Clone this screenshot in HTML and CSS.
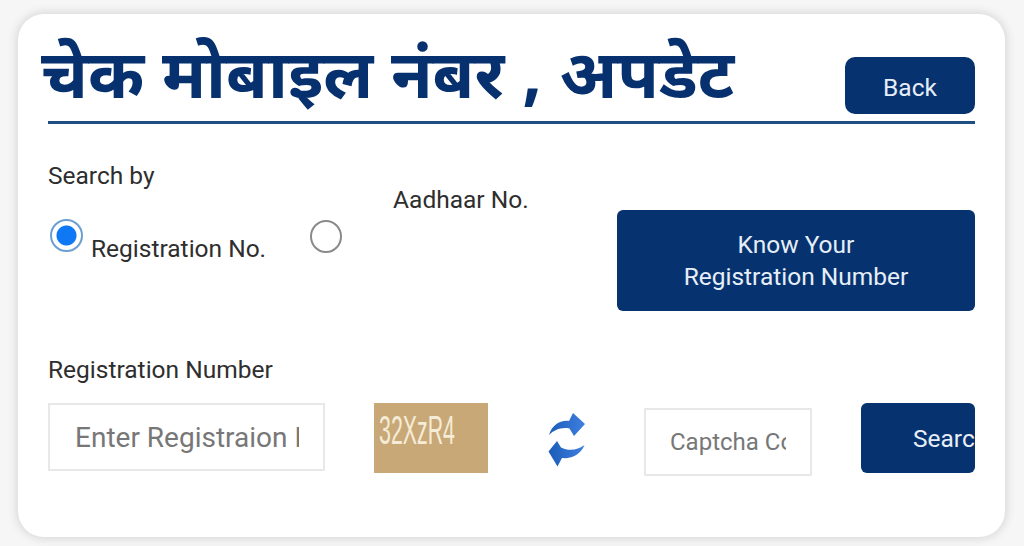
FILE: index.html
```html
<!DOCTYPE html>
<html lang="hi">
<head>
<meta charset="utf-8">
<title>चेक मोबाइल नंबर , अपडेट</title>
<link rel="stylesheet" href="styles.css">
</head>
<body>
<main class="card">
  <header class="head">
    <h1 class="title">चेक मोबाइल नंबर , अपडेट</h1>
    <button class="btn btn-back" type="button">Back</button>
  </header>
  <section class="search">
    <div class="search-left">
      <p class="label">Search by</p>
      <div class="options">
        <label class="option option-reg">
          <span class="radio radio-on"></span>
          <span class="opt-text">Registration No.</span>
        </label>
        <span class="radio radio-off"></span>
        <span class="opt-text opt-aadhaar">Aadhaar No.</span>
      </div>
    </div>
    <button class="btn btn-know" type="button">Know Your<br>Registration Number</button>
  </section>
  <section class="reg">
    <p class="label">Registration Number</p>
    <div class="reg-row">
      <input class="field field-reg" type="text" placeholder="Enter Registraion Number">
      <div class="captcha"><span class="captcha-text">32XzR4</span></div>
      <svg class="refresh" viewBox="0 0 38 54" aria-hidden="true">
        <defs>
          <linearGradient id="g" x1="0" y1="0" x2="1" y2="0">
            <stop offset="0" stop-color="#1c5cb8"/>
            <stop offset="1" stop-color="#3f7fe0"/>
          </linearGradient>
        </defs>
        <path fill="url(#g)" d="M1 22 C4 12 12 7 21 8 L25 0 L37 11 L26 23 L21.5 15.5 C13 14 6 17 1 22 Z"/>
        <path fill="url(#g)" d="M36.5 32 C33 41 24 46 14 45 L9.5 53.5 L0.5 38.5 L9 28 L13 34.5 C21 38.5 30 37 36.5 32 Z"/>
      </svg>
      <input class="field field-cap" type="text" placeholder="Captcha Code">
      <button class="btn btn-search" type="button">Search</button>
    </div>
  </section>
</main>
</body>
</html>
```
FILE: styles.css
```css
* { box-sizing: border-box; }
html, body { margin: 0; height: 100%; }
body {
  width: 1024px;
  height: 546px;
  overflow: hidden;
  background: #f6f6f6;
  padding: 14px 19px 9px 18px;
  font-family: Roboto, "Liberation Sans", sans-serif;
  color: #2e2e2e;
}
.card {
  height: 523px;
  background: #fff;
  border-radius: 26px;
  box-shadow: 0 0 9px 2px #d8d8d8;
  padding: 0 30px;
  display: flex;
  flex-direction: column;
}
.head {
  height: 110px;
  border-bottom: 3px solid #1f4e80;
  display: flex;
  justify-content: space-between;
  align-items: flex-end;
  padding-bottom: 7px;
}
.title {
  margin: 0 0 -13px -7px;
  font-family: "Noto Sans Devanagari", "Noto Sans", "Lohit Devanagari", sans-serif;
  font-size: 67.8px;
  line-height: 90px;
  font-weight: 700;
  color: #07306e;
  white-space: nowrap;
}
.btn {
  border: 0;
  background: #06336f;
  color: #e6eef8;
  font-family: Roboto, "Liberation Sans", sans-serif;
  font-size: 24.5px;
  border-radius: 6px;
}
.btn-back { width: 130px; height: 57px; border-radius: 10px; padding-top: 5px; }
.search {
  display: flex;
  justify-content: space-between;
  align-items: flex-start;
  margin-top: 37px;
}
.label { margin: 0; font-size: 24.5px; line-height: 30px; }
.search-left { width: 520px; }
.options { display: flex; margin-top: 28px; height: 60px; align-items: flex-start; }
.option { display: flex; align-items: flex-start; }
.radio { width: 33px; height: 33px; border-radius: 50%; flex: none; display: block; }
.radio-on {
  margin-left: 2px;
  border: 2px solid #6b9ed1;
  background: radial-gradient(circle, #0f78f5 0 9.5px, #fff 10.5px);
}
.radio-off { width: 32px; height: 33px; margin: 1px 0 0 44px; border: 2px solid #8a8a8a; }
.opt-text { font-size: 24.5px; line-height: 30px; white-space: nowrap; }
.option-reg .opt-text { margin: 15px 0 0 8px; }
.opt-aadhaar { margin: -34px 0 0 51px; }
.btn-know { width: 358px; height: 101px; margin-top: 49px; padding-top: 2px; line-height: 32px; }
.reg { margin-top: 44px; }
.reg-row { display: flex; align-items: flex-start; margin-top: 18px; }
.field {
  border: 2px solid #e8e8e8;
  background: #fff;
  font-family: Roboto, "Liberation Sans", sans-serif;
  outline: 0;
}
.field::placeholder { color: #777; opacity: 1; }
.field-reg { width: 277px; height: 68px; padding: 0 24px 0 25px; font-size: 28px; }
.captcha {
  width: 114px; height: 70px; margin-left: 49px;
  background: #c9a877;
  overflow: hidden;
}
.captcha-text {
  display: block;
  margin: 5px 0 0 5px;
  font-family: "Liberation Sans", sans-serif;
  font-size: 40px;
  line-height: 44px;
  color: #f5ecd8;
  transform: scaleX(.534);
  transform-origin: 0 0;
  white-space: nowrap;
}
.refresh { width: 38px; height: 54px; margin: 10px 0 0 60px; flex: none; }
.field-cap { width: 168px; height: 68px; margin: 5px 0 0 58px; padding: 0 24px 0 24px; font-size: 24px; }
.btn-search {
  width: 114px; height: 70px; margin-left: 49px;
  padding: 0 0 0 52px;
  text-align: left;
  overflow: hidden;
  white-space: nowrap;
}
```
